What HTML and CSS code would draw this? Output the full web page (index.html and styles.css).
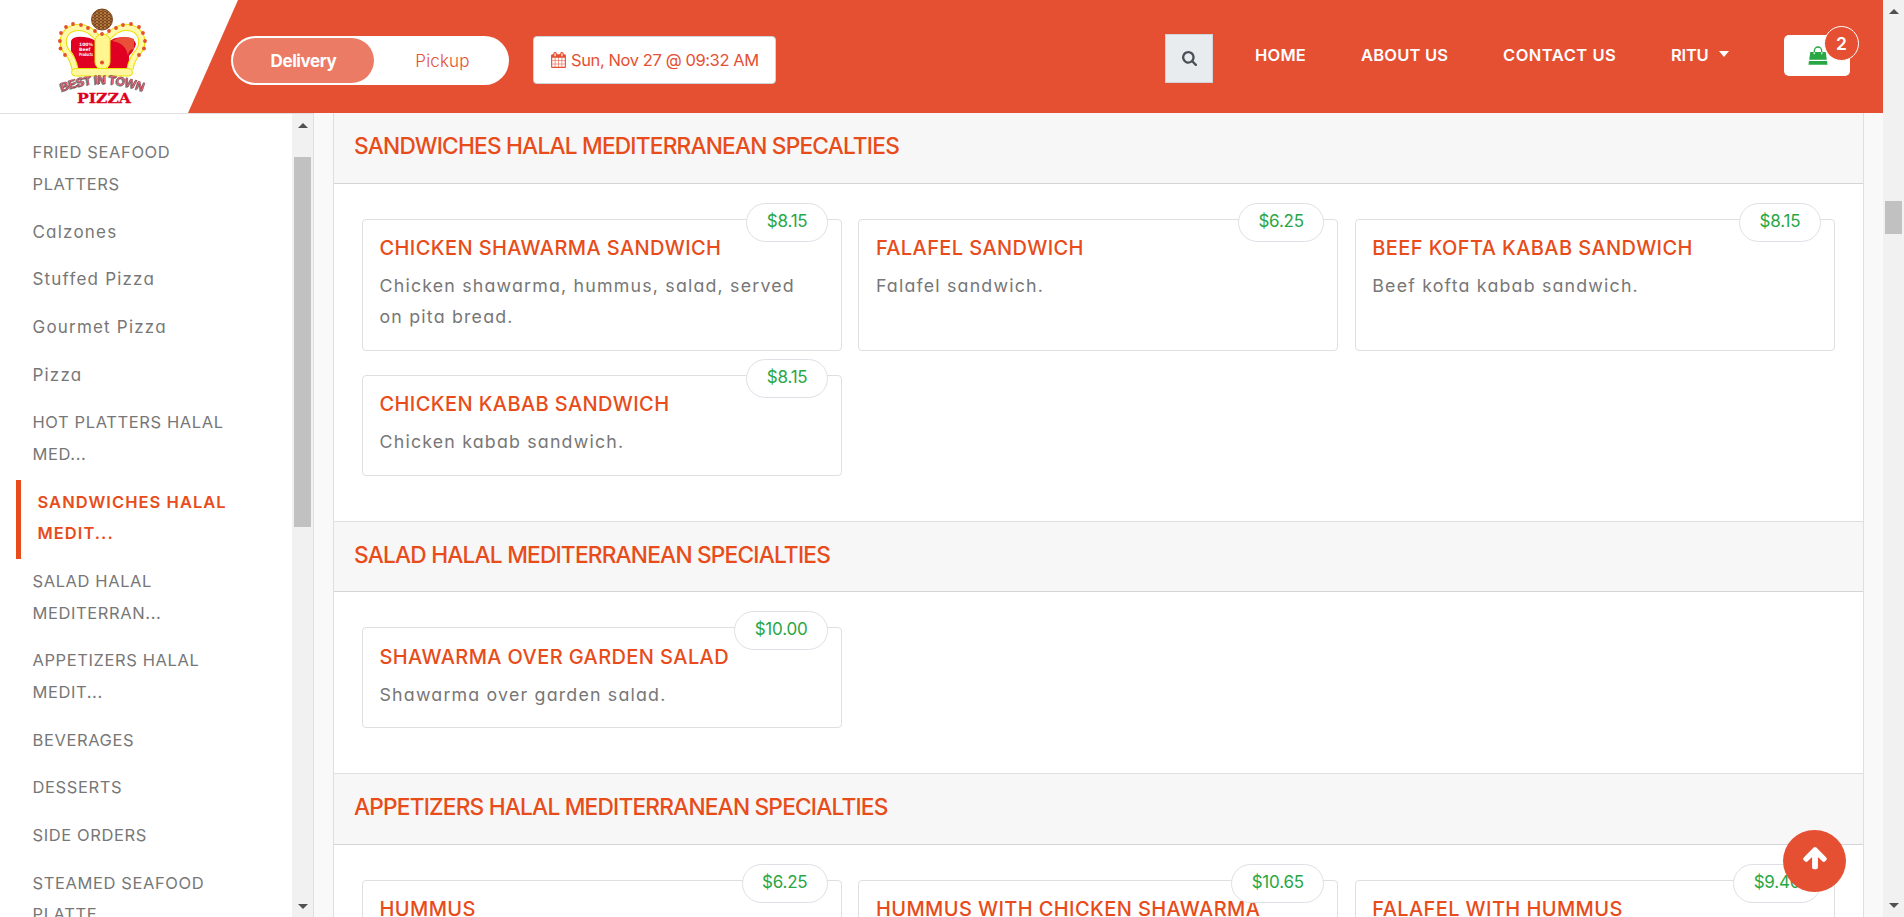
FILE: index.html
```html
<!DOCTYPE html>
<html lang="en">
<head>
<meta charset="utf-8">
<title>Best In Town Pizza</title>
<link rel="stylesheet" href="styles.css">
</head>
<body>
<div class="page">
<div class="site">
  <header class="header">
    <a class="brand">
      <svg class="logo" viewBox="58 7 90 98" width="90" height="98">
        <defs>
          <pattern id="crust" width="4" height="3" patternUnits="userSpaceOnUse"><rect width="4" height="3" fill="#7a4520"/><circle cx="1" cy="1" r=".9" fill="#c99448"/><circle cx="3" cy="2.300" r=".8" fill="#b8783a"/></pattern>
          <path id="arch" d="M62 91.500 Q102 76 144 91.500"/>
        </defs>
        <path d="M71 41 Q73 36 84 37 Q94 38 97 43 V68 H77 Q76 57 71 51Z" fill="#e00022"/>
        <path d="M108 43 Q112 37 124 37 Q134 37 136 44 Q134 51 129 56 V68 H108Z" fill="#e00022"/>
        <path d="M112 41 Q124 34 134 39 L134 49 Q128 50 128 56 Q126 43 112 41Z" fill="#ea5038"/>
        <g fill="none" stroke="#e9df00" stroke-width="7"><path d="M98 38 Q84 22 69 30 Q59 39 66 51 Q73 58 75 69"/><path d="M107 38 Q121 22 136 30 Q146 39 139 51 Q132 58 130 69"/></g>
        <g fill="none" stroke="#fff8a8" stroke-width="5"><path d="M98 38 Q84 22 69 30 Q59 39 66 51 Q73 58 75 69"/><path d="M107 38 Q121 22 136 30 Q146 39 139 51 Q132 58 130 69"/></g>
        <rect x="95" y="34" width="15" height="35" rx="7" fill="#fff68f" stroke="#e9df00"/>
        <rect x="71.500" y="68.500" width="61" height="7.500" rx="3.700" fill="#fff7a0" stroke="#e9df00"/>
        <g fill="#e5502c"><circle cx="73" cy="24" r="1.900"/><circle cx="81" cy="25" r="1.900"/><circle cx="88" cy="28" r="1.900"/><circle cx="95" cy="31" r="1.900"/><circle cx="102" cy="34" r="1.900"/><circle cx="109" cy="31" r="1.900"/><circle cx="116" cy="28" r="1.900"/><circle cx="123" cy="25" r="1.900"/><circle cx="131" cy="24" r="1.900"/><circle cx="66" cy="27" r="1.900"/><circle cx="61" cy="33" r="1.900"/><circle cx="59.900" cy="41" r="1.900"/><circle cx="60.500" cy="48.500" r="1.900"/><circle cx="65" cy="55" r="1.900"/><circle cx="139" cy="27" r="1.900"/><circle cx="143" cy="33" r="1.900"/><circle cx="145" cy="41" r="1.900"/><circle cx="144" cy="48.500" r="1.900"/><circle cx="139" cy="55" r="1.900"/><circle cx="102" cy="62.500" r="2"/></g>
        <circle cx="102" cy="19.500" r="10.500" fill="url(#crust)" stroke="#7a4520"/>
        <text class="logo-note" x="79" y="46">100%</text><text class="logo-note" x="79" y="51">Beef</text><text class="logo-note" x="79" y="56" textLength="14" lengthAdjust="spacingAndGlyphs">Products</text>
        <text class="logo-arch"><textPath href="#arch" textLength="83">BEST IN TOWN</textPath></text>
        <text class="logo-pizza" x="77" y="102.500" textLength="54" lengthAdjust="spacingAndGlyphs">PIZZA</text>
      </svg>
    </a>
    <div class="toolbar">
      <div class="toggle"><span class="toggle-on">Delivery</span><span class="toggle-off">Pickup</span></div>
      <div class="date">
        <svg class="cal" viewBox="64 0 1664 1792"><path d="M192 1664h288v-288h-288v288zm352 0h320v-288h-320v288zm-352-352h288v-320h-288v320zm352 0h320v-320h-320v320zm-352-384h288v-288h-288v288zm736 736h320v-288h-320v288zm-384-736h320v-288h-320v288zm768 736h288v-288h-288v288zm-384-352h320v-320h-320v320zm-352-864v-288q0-13-9.500-22.500t-22.500-9.500h-64q-13 0-22.500 9.500t-9.500 22.500v288q0 13 9.500 22.500t22.500 9.500h64q13 0 22.500-9.500t9.500-22.500zm736 864h288v-320h-288v320zm-384-384h320v-288h-320v288zm384 0h288v-288h-288v288zm32-480v-288q0-13-9.500-22.500t-22.500-9.500h-64q-13 0-22.500 9.500t-9.500 22.500v288q0 13 9.500 22.500t22.500 9.500h64q13 0 22.500-9.500t9.500-22.500zm384-64v1280q0 52-38 90t-90 38h-1408q-52 0-90-38t-38-90v-1280q0-52 38-90t90-38h128v-96q0-66 47-113t113-47h64q66 0 113 47t47 113v96h384v-96q0-66 47-113t113-47h64q66 0 113 47t47 113v96h128q52 0 90 38t38 90z"/></svg>
        <span>Sun, Nov 27 @ 09:32 AM</span>
      </div>
    </div>
    <div class="search"><svg viewBox="64 128 1664 1664" width="15" height="15"><path fill="#495057" d="M1216 832q0-185-131.500-316.500t-316.500-131.500-316.500 131.500-131.500 316.500 131.500 316.500 316.500 131.500 316.500-131.500 131.500-316.500zm512 832q0 52-38 90t-90 38q-54 0-90-38l-343-342q-179 124-399 124-143 0-273.500-55.500t-225-150-150-225-55.500-273.500 55.500-273.500 150-225 225-150 273.500-55.500 273.500 55.500 225 150 150 225 55.500 273.500q0 220-124 399l343 343q37 37 37 90z"/></svg></div>
    <nav class="menu"><a class="menu-home">HOME</a><a class="menu-about">ABOUT US</a><a class="menu-contact">CONTACT US</a><a class="menu-user">RITU<i class="caret"></i></a></nav>
    <div class="cart">
      <svg viewBox="0 0 20 19" width="20" height="19"><path d="M2.300 6h15.400l1.100 7.700H1.200zM.9 15h18.200l.4 3.700H.5z" fill="#28a745"/><path d="M6.300 8.200V5a3.700 4 0 0 1 7.400 0v3.200" fill="none" stroke="#28a745" stroke-width="1.300"/><path d="M6.300 8.200V6.200M13.700 8.200V6.200" stroke="#c9ecd0" stroke-width="1.500"/></svg>
      <span class="badge">2</span>
    </div>
  </header>

  <div class="content">
    <aside class="sidebar">
      <ul class="cats">
        <li>FRIED SEAFOOD<br>PLATTERS</li>
        <li class="mixed">Calzones</li>
        <li class="mixed">Stuffed Pizza</li>
        <li class="mixed">Gourmet Pizza</li>
        <li class="mixed">Pizza</li>
        <li>HOT PLATTERS HALAL<br>MED...</li>
        <li class="active">SANDWICHES HALAL<br>MEDIT...</li>
        <li>SALAD HALAL<br>MEDITERRAN...</li>
        <li>APPETIZERS HALAL<br>MEDIT...</li>
        <li>BEVERAGES</li>
        <li>DESSERTS</li>
        <li>SIDE ORDERS</li>
        <li>STEAMED SEAFOOD<br>PLATTE...</li>
      </ul>
      <div class="scroll scroll-side"><i class="up"></i><i class="thumb"></i><i class="down"></i></div>
    </aside>
    <main class="panel">
      <section>
        <h2>SANDWICHES HALAL MEDITERRANEAN SPECALTIES</h2>
        <div class="cards">
          <article class="card"><b class="price">$8.15</b><h3>CHICKEN SHAWARMA SANDWICH</h3><p>Chicken shawarma, hummus, salad, served<br>on pita bread.</p></article>
          <article class="card"><b class="price">$6.25</b><h3>FALAFEL SANDWICH</h3><p>Falafel sandwich.</p></article>
          <article class="card"><b class="price">$8.15</b><h3>BEEF KOFTA KABAB SANDWICH</h3><p>Beef kofta kabab sandwich.</p></article>
          <article class="card"><b class="price">$8.15</b><h3>CHICKEN KABAB SANDWICH</h3><p>Chicken kabab sandwich.</p></article>
        </div>
      </section>
      <section>
        <h2>SALAD HALAL MEDITERRANEAN SPECIALTIES</h2>
        <div class="cards">
          <article class="card"><b class="price">$10.00</b><h3>SHAWARMA OVER GARDEN SALAD</h3><p>Shawarma over garden salad.</p></article>
        </div>
      </section>
      <section>
        <h2>APPETIZERS HALAL MEDITERRANEAN SPECIALTIES</h2>
        <div class="cards">
          <article class="card"><b class="price">$6.25</b><h3>HUMMUS</h3></article>
          <article class="card"><b class="price">$10.65</b><h3>HUMMUS WITH CHICKEN SHAWARMA</h3></article>
          <article class="card"><b class="price">$9.40</b><h3>FALAFEL WITH HUMMUS</h3></article>
        </div>
      </section>
    </main>
  </div>
  <a class="to-top"><svg viewBox="53 190 1686 1650" width="26" height="25"><path fill="#fff" d="M1675 971q0 51-37 90l-75 75q-38 38-91 38-54 0-90-38l-294-293v704q0 52-37.500 84.500t-90.500 32.500h-128q-53 0-90.500-32.500t-37.500-84.500v-704l-294 293q-36 38-90 38t-90-38l-75-75q-38-38-38-90 0-53 38-91l651-651q35-37 90-37 54 0 91 37l651 651q37 39 37 91z"/></svg></a>
</div>
<div class="scroll scroll-page"><i class="up"></i><i class="thumb"></i><i class="down"></i></div>
</div>
</body>
</html>
```

FILE: styles.css
```css
* { box-sizing: border-box; }
body { margin: 0; height: 917px; overflow: hidden; background: #f9f9f9; color: #777; font-family: Inter, "Open Sans", sans-serif; font-feature-settings: "cv11"; }
.page { display: flex; height: 917px; }
.site { position: relative; width: 1883px; height: 917px; display: flex; flex-direction: column; overflow: hidden; }

.header { height: 113px; flex: none; display: flex; align-items: flex-start; color: #fff; background: #e55033; }
.brand { width: 238px; height: 113px; flex: none; background: #fff; clip-path: polygon(0 0, 238px 0, 188px 113px, 0 113px); padding: 7px 0 0 58px; }
.logo { display: block; }
.logo-note { font: bold 4.500px "DejaVu Sans"; fill: #fff; }
.logo-arch { font: bold 12px "Liberation Sans"; fill: #ee6476; stroke: #5a3a40; stroke-width: .35px; filter: drop-shadow(-1px 1px 0 #888); }
.logo-pizza { font: bold 13.500px "DejaVu Serif"; fill: #dd0020; stroke: #dd0020; stroke-width: .3px; }
.toolbar { width: 927px; flex: none; display: flex; gap: 24px; padding-top: 36px; margin-left: -7px; }
.toggle { width: 278px; height: 49px; padding: 2px; border-radius: 25px; background: #fff; display: flex; font-size: 17px; line-height: 46px; text-align: center; }
.toggle-on { width: 141px; height: 45px; border-radius: 23px; background: #eb7b65; font-weight: 700; letter-spacing: -.4px; }
.toggle-off { flex: 1; color: #e55033; padding-left: 4px; letter-spacing: .15px; font-weight: 300; }
.date { width: 243px; height: 48px; border: 1px solid #ced4da; border-radius: 4px; background: #fff; color: #e55033; display: flex; align-items: center; gap: 5px; padding-left: 17px; font-size: 16.500px; letter-spacing: -.4px; white-space: nowrap; }
.cal { width: 15px; height: 16px; fill: #e55033; flex: none; }
.search { width: 48px; height: 49px; margin: 34px 0 0 7px; border: 1px solid #ced4da; background: #e9ecef; display: flex; align-items: center; justify-content: center; flex: none; }
.menu { display: flex; width: 571px; flex: none; padding-top: 43px; font-size: 16.500px; font-weight: 600; line-height: 24px; white-space: nowrap; letter-spacing: .2px; }
.menu-home { width: 106px; margin-left: 42px; }
.menu-about { width: 142px; }
.menu-contact { width: 168px; letter-spacing: .5px; }
.menu-user { letter-spacing: -.2px; }
.caret { display: inline-block; border: 5.500px solid transparent; border-top: 6px solid #fff; border-bottom: 0; margin-left: 10px; vertical-align: 4px; }
.cart { position: relative; width: 66px; height: 41px; margin-top: 35px; border-radius: 5px; background: #fff; padding: 11px 0 0 24px; flex: none; }
.cart svg { display: block; }
.badge { position: absolute; left: 40px; top: -9px; width: 35px; height: 35px; border: 1px solid #fff; border-radius: 50%; background: #e55033; text-align: center; font-size: 17.500px; font-weight: 600; line-height: 33px; }

.content { display: flex; flex: 1; min-height: 0; overflow: hidden; }
.sidebar { width: 314px; background: #fff; border-top: 1px solid #dfdfdf; border-right: 1px solid #dfdfdf; display: flex; flex: none; }
.cats { width: 292px; margin: 0; padding: 16.400px 0 0 16px; list-style: none; font-size: 16.500px; line-height: 31.650px; letter-spacing: .6px; white-space: nowrap; }
.cats li { padding: 7px 0 9px 16.500px; }
.cats .mixed { letter-spacing: 1.200px; font-size: 17px; }
.cats .active { border-left: 5px solid #e74c1a; color: #e74c1a; font-weight: 600; letter-spacing: 1.050px; }

.panel { width: 1531px; margin-left: 19px; border: solid #dfdfdf; border-width: 0 1px; background: #fff; flex: none; overflow: hidden; }
.panel h2 { margin: 0; height: 71.400px; padding-left: 20px; border-top: 1px solid #dfdfdf; border-bottom: 1px solid #d5d5d5; background: #f7f7f7; color: #e74c1a; font-size: 22.700px; font-weight: 550; line-height: 66px; letter-spacing: -.8px; white-space: nowrap; }
.panel section:first-child h2 { height: 71px; border-top: 0; }
.cards { display: grid; grid-template-columns: repeat(3, 480px); gap: 24px 16.400px; padding: 35px 0 45px 28px; }
.card { position: relative; min-height: 101px; border: 1px solid #dfdfdf; border-radius: 4px; padding: 16.300px 17px 17.700px; white-space: nowrap; }
.card h3 { margin: 0 0 0 -.5px; color: #e74c1a; font-size: 20px; font-weight: 550; line-height: 24px; letter-spacing: .4px; }
.card p { margin: 10px 0 0 -.5px; font-size: 17.800px; line-height: 31px; letter-spacing: 1.190px; }
.price { position: absolute; right: 13px; top: -17px; height: 39px; padding: 0 19.500px; border: 1px solid #dfe0e6; border-radius: 20px; background: #fff; color: #28a745; font-size: 17px; font-weight: 400; line-height: 35px; letter-spacing: -.2px; }

.to-top { position: absolute; left: 1783px; top: 830px; width: 63px; height: 62px; border-radius: 50%; background: #e55033; display: flex; align-items: center; justify-content: center; padding-bottom: 4px; }

.scroll { display: flex; flex-direction: column; align-items: center; background: #f1f1f1; flex: none; }
.scroll-page { width: 21px; padding: 9px 0; }
.scroll-side { width: 21px; padding: 9px 0 8px; }
.scroll .thumb { width: 17px; background: #c1c1c1; }
.scroll-page .thumb { height: 33px; margin-top: 187px; }
.scroll-side .thumb { height: 370px; margin-top: 29px; }
.up { border: 5px solid transparent; border-top: 0; border-bottom-color: #505050; }
.down { border: 5px solid transparent; border-bottom: 0; border-top-color: #505050; margin-top: auto; }
```
